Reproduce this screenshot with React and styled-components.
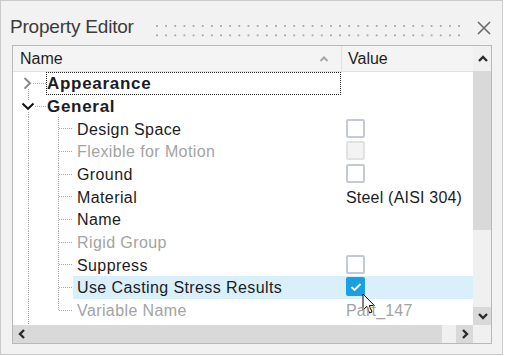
import React from "react"
import styled, { createGlobalStyle } from "styled-components"

const GlobalStyle = createGlobalStyle`
	html, body {
		margin: 0;
		padding: 0;
		background: #ffffff;
	}
	body {
		font-family: "Liberation Sans", Arial, sans-serif;
	}
`

const ROW_H = 22.667

const rows = [
	{ name: "Appearance", level: 0, expander: "closed", focused: true },
	{ name: "General", level: 0, expander: "open" },
	{ name: "Design Space", level: 1, value: { type: "check" } },
	{ name: "Flexible for Motion", level: 1, disabled: true, value: { type: "check", disabled: true } },
	{ name: "Ground", level: 1, value: { type: "check" } },
	{ name: "Material", level: 1, value: { type: "text", text: "Steel (AISI 304)" } },
	{ name: "Name", level: 1 },
	{ name: "Rigid Group", level: 1, disabled: true },
	{ name: "Suppress", level: 1, value: { type: "check" } },
	{ name: "Use Casting Stress Results", level: 1, selected: true, value: { type: "check", checked: true } },
	{ name: "Variable Name", level: 1, disabled: true, last: true, value: { type: "text", text: "Part_147", disabled: true } },
]

const Window = styled.div`
	width: 503px;
	height: 355px;
	box-sizing: border-box;
	border: 1px solid #cbcbcb;
	background: #f2f2f2;
	display: flex;
	flex-direction: column;
	padding: 0 10px 10px 11px;
`

const TitleBar = styled.div`
	height: 44px;
	display: flex;
	align-items: center;
	flex-shrink: 0;
`

const Title = styled.div`
	font-size: 19px;
	color: #3b3b3b;
	letter-spacing: -0.2px;
	margin-left: -2px;
	margin-top: 8px;
`

const Grip = styled.div`
	flex: 1;
	height: 12px;
	margin: 15px 0 0 22px;
	background-image: radial-gradient(circle at 1px 1px, #a9a9a9 1px, transparent 1.3px);
	background-size: 9.17px 9.4px;
`

const CloseButton = styled.div`
	width: 16px;
	height: 16px;
	margin: 9px 0 0 10px;
	display: flex;
	align-items: center;
	justify-content: center;
`

const Table = styled.div`
	flex: 1;
	border: 1px solid #b9b9b9;
	background: #ffffff;
	display: grid;
	grid-template-columns: 460px 19px;
	grid-template-rows: 279px 18px;
	overflow: hidden;
`

const Content = styled.div`
	display: flex;
	flex-direction: column;
	overflow: hidden;
	position: relative;
`

const Header = styled.div`
	height: 25px;
	flex-shrink: 0;
	display: flex;
	background: #f4f4f4;
	border-bottom: 1px solid #e2e2e2;
	font-size: 16px;
	color: #1e1e1e;
`

const HeaderCell = styled.div`
	width: ${ p => p.$width ? `${ p.$width }px` : "auto" };
	flex: ${ p => p.$width ? "none" : 1 };
	box-sizing: border-box;
	display: flex;
	align-items: center;
	padding-left: ${ p => p.$pad }px;
	padding-right: 12px;
	padding-top: 1px;
	border-right: ${ p => p.$divider ? "1px solid #e0e0e0" : "none" };
	justify-content: space-between;
`

const Row = styled.div`
	height: ${ ROW_H }px;
	display: flex;
	flex-shrink: 0;
	font-size: 16px;
	letter-spacing: 0.4px;
`

const NameCell = styled.div`
	width: 328px;
	flex: none;
	display: flex;
`

const Label = styled.div`
	flex: 1;
	display: flex;
	align-items: center;
	padding: 2px 0 0 ${ p => p.$level === 0 ? 1 : 4 }px;
	font-size: ${ p => p.$level === 0 ? 17 : 16 }px;
	font-weight: ${ p => p.$level === 0 ? 700 : 400 };
	letter-spacing: ${ p => p.$level === 0 ? "0.7px" : "0.4px" };
	color: ${ p => p.$disabled ? "#a3a3a3" : "#1c1c24" };
	background: ${ p => p.$selected ? "#d9f0fb" : "transparent" };
	outline: ${ p => p.$focused ? "1px dotted #222" : "none" };
	outline-offset: -1px;
	white-space: nowrap;
	overflow: hidden;
`

const ValueCell = styled.div`
	flex: 1;
	display: flex;
	align-items: center;
	padding: 0 0 1px 5px;
	background: ${ p => p.$selected ? "#d9f0fb" : "transparent" };
	color: ${ p => p.$disabled ? "#a3a3a3" : "#1c1c24" };
	letter-spacing: 0.2px;
	white-space: nowrap;
	position: relative;
`

const ValueText = styled.span`
	padding-top: 4px;
`

const Check = styled.div`
	width: 19px;
	height: 19px;
	box-sizing: border-box;
	border-radius: 2px;
	border: 2px solid ${ p => p.$checked ? "#1b9fe3" : p.$disabled ? "#e2e2e2" : "#c3cad4" };
	background: ${ p => p.$checked ? "#1b9fe3" : p.$disabled ? "#f3f3f3" : "#ffffff" };
	display: flex;
	align-items: center;
	justify-content: center;
`

const Cursor = styled.svg`
	position: absolute;
	left: 21px;
	top: 17px;
`

const VScroll = styled.div`
	display: flex;
	flex-direction: column;
	background: #f0f0f0;
`

const HScroll = styled.div`
	display: flex;
	background: #f0f0f0;
`

const ScrollPart = styled.div`
	flex: ${ p => p.$size ? "none" : 1 };
	${ p => p.$vertical ? "height" : "width" }: ${ p => p.$size ? `${ p.$size }px` : "auto" };
	background: ${ p => p.$dark ? "#d9d9d9" : "#f0f0f0" };
	display: flex;
	align-items: center;
	justify-content: ${ p => p.$start ? "flex-start" : "center" };
	padding-left: ${ p => p.$start ? "4px" : "0" };
`

const Corner = styled.div`
	background: #f0f0f0;
`

const Arrow = ({ dir }) => {
	const rot = { up: 0, down: 180, left: 270, right: 90 }[dir]
	return (
		<svg width="10" height="10" viewBox="0 0 10 10" style={ { transform: `rotate(${ rot }deg)` } }>
			<path d="M1 7 L5 3 L9 7" fill="none" stroke="#2b2b2b" strokeWidth="2.4" />
		</svg>
	)
}

const dots = { stroke: "#a8a8a8", strokeWidth: 1, strokeDasharray: "1 1" }

const TreeGutter = ({ row }) => {
	const h = ROW_H
	const c = 11.5
	const w = row.level === 0 ? 33 : 60
	return (
		<svg width={ w } height={ h } style={ { flex: "none", display: "block" } }>
			{ row.expander === "closed" && (
				<>
					<line x1="15.5" y1="17" x2="15.5" y2={ h } { ...dots } />
					<line x1="20" y1={ c } x2="33" y2={ c } { ...dots } />
					<path d="M11.5 6 L17 11.3 L11.5 16.6" fill="none" stroke="#8a8a8a" strokeWidth="2" />
				</>
			) }
			{ row.expander === "open" && (
				<>
					<line x1="15.5" y1="0" x2="15.5" y2="6" { ...dots } />
					<line x1="15.5" y1="17" x2="15.5" y2={ h } { ...dots } />
					<line x1="22" y1={ c } x2="33" y2={ c } { ...dots } />
					<path d="M9.5 8.5 L15 13.8 L20.5 8.5" fill="none" stroke="#111" strokeWidth="2" />
				</>
			) }
			{ row.level === 1 && (
				<>
					<line x1="15.5" y1="0" x2="15.5" y2={ h } { ...dots } />
					<line x1="45.5" y1="0" x2="45.5" y2={ row.last ? c : h } { ...dots } />
					<line x1="46" y1={ c } x2="60" y2={ c } { ...dots } />
				</>
			) }
		</svg>
	)
}

const Value = ({ row }) => {
	const v = row.value
	if (!v) return null
	if (v.type === "text") return <ValueText>{ v.text }</ValueText>
	return (
		<Check $checked={ v.checked } $disabled={ v.disabled }>
			{ v.checked && (
				<svg width="12" height="10" viewBox="0 0 12 10">
					<path d="M1.5 5.2 L4.5 8 L10.5 2" fill="none" stroke="#ffffff" strokeWidth="1.8" />
				</svg>
			) }
		</Check>
	)
}

const PropertyRow = ({ row }) => (
	<Row>
		<NameCell>
			<TreeGutter row={ row } />
			<Label
				$level={ row.level }
				$disabled={ row.disabled }
				$selected={ row.selected }
				$focused={ row.focused }
			>
				{ row.name }
			</Label>
		</NameCell>
		<ValueCell $selected={ row.selected } $disabled={ row.value && row.value.disabled }>
			<Value row={ row } />
			{ row.selected && (
				<Cursor width="14" height="22" viewBox="0 0 14 22">
					<path d="M1 1 L1 17 L4.8 13.4 L7.6 20 L10 19 L7.3 12.6 L12.4 12.6 Z" fill="#ffffff" stroke="#000" strokeWidth="1" strokeLinejoin="round" />
				</Cursor>
			) }
		</ValueCell>
	</Row>
)

export default function App() {
	return (
		<>
			<GlobalStyle />
			<Window>
				<TitleBar>
					<Title>Property Editor</Title>
					<Grip />
					<CloseButton>
						<svg width="14" height="14" viewBox="0 0 14 14">
							<path d="M1 1 L13 13 M13 1 L1 13" stroke="#6a6a6a" strokeWidth="1.6" />
						</svg>
					</CloseButton>
				</TitleBar>
				<Table>
					<Content>
						<Header>
							<HeaderCell $width={ 329 } $pad={ 7 } $divider>
								<span>Name</span>
								<svg width="10" height="8" viewBox="0 0 10 8">
									<path d="M1.5 6 L5 2.5 L8.5 6" fill="none" stroke="#a5a5a5" strokeWidth="2" />
								</svg>
							</HeaderCell>
							<HeaderCell $pad={ 6 }>Value</HeaderCell>
						</Header>
						{ rows.map(r => <PropertyRow key={ r.name } row={ r } />) }
						<Row>
							<svg width="60" height="6" style={ { display: "block" } }>
								<line x1="15.5" y1="0" x2="15.5" y2="6" { ...dots } />
							</svg>
						</Row>
					</Content>
					<VScroll>
						<ScrollPart $vertical $size={ 25 }><Arrow dir="up" /></ScrollPart>
						<ScrollPart $vertical $size={ 159 } $dark />
						<ScrollPart $vertical />
						<ScrollPart $vertical $size={ 18 } $dark><Arrow dir="down" /></ScrollPart>
					</VScroll>
					<HScroll>
						<ScrollPart $size={ 425 } $dark $start><Arrow dir="left" /></ScrollPart>
						<ScrollPart />
						<ScrollPart $size={ 17 } $dark><Arrow dir="right" /></ScrollPart>
					</HScroll>
					<Corner />
				</Table>
			</Window>
		</>
	)
}
